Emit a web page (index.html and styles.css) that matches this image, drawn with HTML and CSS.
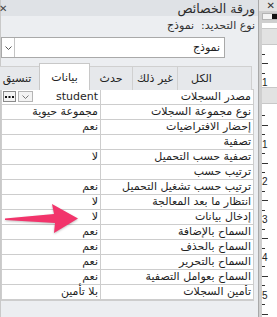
FILE: index.html
```html
<!DOCTYPE html>
<html lang="ar" dir="rtl">
<head>
  <meta charset="UTF-8" />
  <title>ورقة الخصائص</title>
  <link rel="stylesheet" href="styles.css">
</head>
<body>

  <!-- منطقة التصميم مع المسطرة العمودية -->
  <section class="design">
    <div class="doc-bar"><span class="doc-close">✕</span></div>
    <div class="ruler-corner"><span class="corner-box"></span></div>
    <div class="ruler">
      <div class="ruler-band"></div>
      <div class="ruler-part">
        <i class="tick"></i><i class="tick long"></i><i class="tick"></i><b class="num">1</b>
      </div>
      <div class="ruler-band"></div>
      <div class="ruler-part lower">
        <i class="tick"></i><i class="tick long"></i><i class="tick"></i><b class="num">1</b>
        <i class="tick"></i><i class="tick long"></i><i class="tick"></i><b class="num">2</b>
        <i class="tick"></i><i class="tick long"></i><i class="tick"></i><b class="num">3</b>
        <i class="tick"></i><i class="tick long"></i><i class="tick"></i><b class="num">4</b>
        <i class="tick"></i><i class="tick long"></i><i class="tick"></i><b class="num">5</b>
        <i class="tick"></i><i class="tick long"></i>
      </div>
    </div>
  </section>

  <!-- ورقة الخصائص -->
  <aside class="sheet">
    <div class="sheet-title">
      <span>ورقة الخصائص</span>
      <span class="sheet-close">✕</span>
    </div>
    <div class="sel-type">نوع التحديد:&nbsp; نموذج</div>

    <div class="combo">
      <span class="combo-text">نموذج</span>
      <span class="combo-btn">
        <svg width="7" height="4" viewBox="0 0 7 4"><polyline points="0.5,0.5 3.5,3.5 6.5,0.5" fill="none" stroke="#555" stroke-width="1"/></svg>
      </span>
    </div>

    <div class="tabs">
      <span class="tab tab-all">الكل</span>
      <span class="tab">غير ذلك</span>
      <span class="tab tab-event">حدث</span>
      <span class="tab tab-data active">بيانات</span>
      <span class="tab tab-format">تنسيق</span>
    </div>

    <div class="props">
      <div class="prop">
        <span class="name">مصدر السجلات</span>
        <span class="val">
          <span>student</span>
          <span class="val-btns">
            <span class="mini-btn drop">
              <svg width="7" height="4" viewBox="0 0 7 4"><polyline points="0.5,0.5 3.5,3.5 6.5,0.5" fill="none" stroke="#777" stroke-width="1"/></svg>
            </span>
            <span class="mini-btn dots">
              <svg width="9" height="2" viewBox="0 0 9 2"><rect x="0" y="0" width="2" height="2" fill="#111"/><rect x="3.5" y="0" width="2" height="2" fill="#111"/><rect x="7" y="0" width="2" height="2" fill="#111"/></svg>
            </span>
          </span>
        </span>
      </div>
      <div class="prop"><span class="name">نوع مجموعة السجلات</span><span class="val">مجموعة حيوية</span></div>
      <div class="prop"><span class="name">إحضار الافتراضيات</span><span class="val">نعم</span></div>
      <div class="prop"><span class="name">تصفية</span><span class="val"></span></div>
      <div class="prop"><span class="name">تصفية حسب التحميل</span><span class="val">لا</span></div>
      <div class="prop"><span class="name">ترتيب حسب</span><span class="val"></span></div>
      <div class="prop"><span class="name">ترتيب حسب تشغيل التحميل</span><span class="val">نعم</span></div>
      <div class="prop"><span class="name">انتظار ما بعد المعالجة</span><span class="val">لا</span></div>
      <div class="prop"><span class="name">إدخال بيانات</span><span class="val">لا</span></div>
      <div class="prop"><span class="name">السماح بالإضافة</span><span class="val">نعم</span></div>
      <div class="prop"><span class="name">السماح بالحذف</span><span class="val">نعم</span></div>
      <div class="prop"><span class="name">السماح بالتحرير</span><span class="val">نعم</span></div>
      <div class="prop"><span class="name">السماح بعوامل التصفية</span><span class="val">نعم</span></div>
      <div class="prop"><span class="name">تأمين السجلات</span><span class="val">بلا تأمين</span></div>
    </div>

    <!-- سهم التنبيه فوق الجدول -->
    <svg class="pointer" width="80" height="36" viewBox="0 0 80 36">
      <polygon points="1,15.5 50,11 48,1 74,15.5 50,30 51,20 1,17" fill="#f2346b"/>
    </svg>
  </aside>

</body>
</html>
```

FILE: styles.css
```css
:root {
  --panel: #eceef1;
  --title: #dfe2e6;
  --line: #cdcdcd;
  --text: #1e1e1e;
}
* {
  box-sizing: border-box;
}
html, body {
  margin: 0;
}
body {
  width: 277px;
  height: 317px;
  overflow: hidden;
  display: flex;
  align-items: stretch;
  font-family: "DejaVu Sans", sans-serif;
  font-size: 11px;
  color: var(--text);
  background: var(--panel);
}

/* 🔹 SHEET */
.sheet {
  position: relative;
  flex: none;
  width: 258px;
  display: flex;
  flex-direction: column;
  background: var(--panel);
  border-left: 1px solid #c9c9c9;
}
.sheet-title {
  height: 16px;
  display: flex;
  justify-content: space-between;
  align-items: center;
  padding: 0 3px 0 0;
  background: var(--title);
  font-size: 12.5px;
  color: #2b2b2b;
}
.sheet-close {
  font-size: 10px;
  margin-left: -2px;
  color: #444;
}
.sel-type {
  height: 21px;
  padding: 3px 3px 0 0;
  font-size: 11px;
  color: #333;
}
.combo {
  height: 21px;
  margin: 0 33px 5px 0;
  display: flex;
  justify-content: space-between;
  align-items: center;
  background: #fff;
  border: 1px solid #a9a9a9;
}
.combo-text {
  padding-right: 4px;
}
.combo-btn {
  width: 13px;
  height: 100%;
  display: flex;
  align-items: center;
  justify-content: center;
  border-right: 1px solid #c4c4c4;
}

/* 🔹 TABS */
.tabs {
  display: flex;
  align-items: flex-end;
  height: 27px;
  margin: 0 6px -1px 0;
  position: relative;
  z-index: 1;
}
.tab {
  flex: none;
  width: 46px;
  height: 24px;
  display: flex;
  align-items: center;
  justify-content: center;
  background: #e6e8eb;
  border: 1px solid #d0d0d0;
  border-bottom: none;
  margin-left: -1px;
  color: #222;
}
.tab-all {
  width: 75px;
  padding-right: 26px;
}
.tab-event { width: 44px; }
.tab-data { width: 51px; }
.tab-format { width: 46px; }
.tab.active {
  height: 27px;
  background: #fff;
  border-color: #c8c8c8;
  position: relative;
  z-index: 2;
}

/* 🔹 PROPS GRID */
.props {
  margin-right: 4px;
  background: #fff;
  border: 1px solid var(--line);
}
.prop {
  display: grid;
  grid-template-columns: 153px 1fr;
  height: 15px;
  border-bottom: 1px solid var(--line);
  line-height: 14px;
}
.prop .name {
  padding-right: 2px;
  border-left: 1px solid var(--line);
  white-space: nowrap;
  overflow: hidden;
}
.prop .val {
  display: flex;
  justify-content: space-between;
  padding-right: 2px;
  white-space: nowrap;
}
.val-btns {
  display: flex;
  gap: 2px;
  padding: 1px 0 1px 1px;
}
.mini-btn {
  height: 11px;
  display: flex;
  align-items: center;
  justify-content: center;
  background: #f3f3f3;
  border: 1px solid #b5b5b5;
}
.mini-btn.drop { width: 15px; }
.mini-btn.dots {
  width: 13px;
  border-color: #8a8a8a;
}

.pointer {
  position: absolute;
  left: 3px;
  top: 203px;
  filter: drop-shadow(0 1px 1px rgba(0,0,0,0.25));
}

/* 🔹 DESIGN / RULER */
.design {
  flex: none;
  width: 19px;
  display: flex;
  flex-direction: column;
  background: #cfcfcf;
  border-left: 1px solid #a8a8a8;
}
.doc-bar {
  height: 16px;
  display: flex;
  align-items: center;
  padding-right: 2px;
  background: #e4e4e4;
}
.doc-close {
  font-size: 10px;
  color: #333;
}
.ruler-corner {
  height: 12px;
  margin: 2px 0 0 3px;
  display: flex;
  align-items: center;
  padding-left: 4px;
  background: #f4f4f4;
  border: 1px solid #b4b4b4;
  border-right: none;
}
.corner-box {
  width: 5px;
  height: 5px;
  background: #111;
}
.ruler {
  flex: 1;
  margin: 3px 0 0 3px;
  background: #fff;
  padding-top: 5px;
  display: flex;
  flex-direction: column;
}
.ruler-band {
  height: 17px;
  background: #e2e2e2;
  border-top: 1px solid #c8c8c8;
  border-bottom: 1px solid #c8c8c8;
}
.ruler-part {
  display: flex;
  flex-direction: column;
  padding-top: 4.7px;
  height: 42px;
}
.ruler-part.lower {
  padding-top: 7.2px;
  height: auto;
}
.tick, .num {
  height: 9.45px;
  flex: none;
  display: flex;
  align-items: center;
  justify-content: flex-end;
  padding-right: 5px;
}
.tick::before {
  content: "";
  width: 3px;
  height: 1px;
  background: #333;
}
.tick.long::before {
  width: 6px;
}
.tick.long {
  padding-right: 3px;
}
.num {
  font-family: "Liberation Sans", sans-serif;
  font-size: 10px;
  font-weight: normal;
  padding-right: 4px;
  color: #222;
}
```
